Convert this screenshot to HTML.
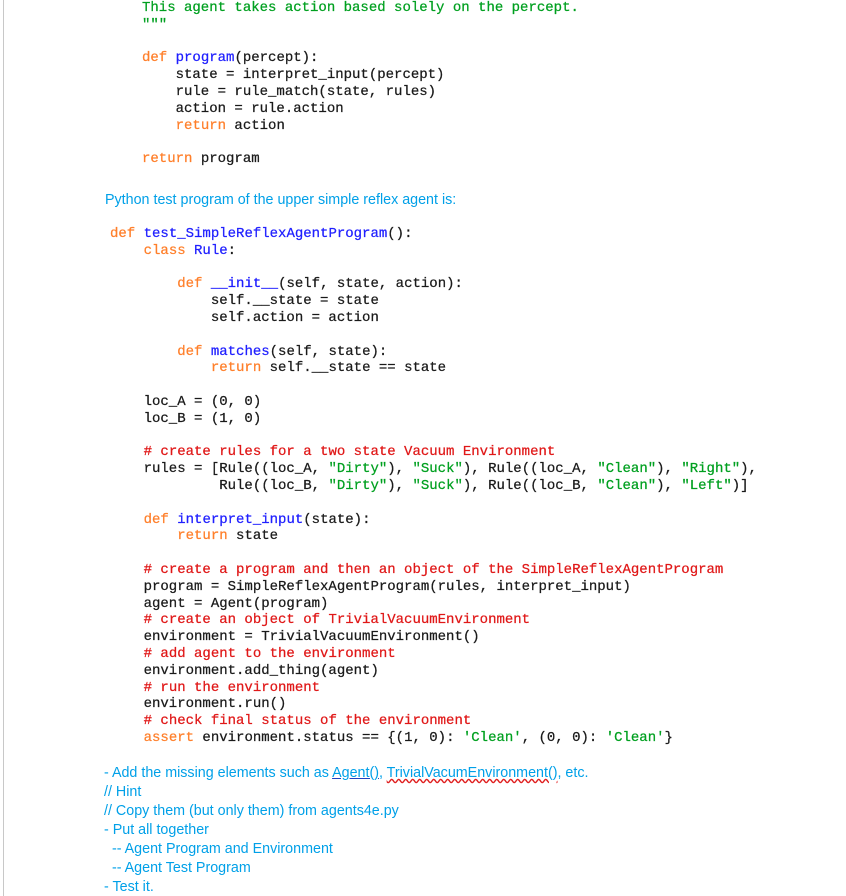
<!DOCTYPE html>
<html><head><meta charset="utf-8"><style>
html,body{margin:0;padding:0;background:#fff;width:846px;height:896px;overflow:hidden;position:relative}
.bar{position:absolute;left:3px;top:0;width:1px;height:896px;background:#c8c8c8}
.c{position:absolute;font-family:"Liberation Mono",monospace;font-size:14px;line-height:16.8px;white-space:pre;color:#1a1a1a;-webkit-text-stroke:0.25px}
.k{color:#ff7f2a}.f{color:#2020ff}.s{color:#00a020}.r{color:#e01818}
.t{position:absolute;font-family:"Liberation Sans",sans-serif;font-size:14.3px;line-height:19px;white-space:pre;color:#00a0e8}
.u{text-decoration:underline;text-decoration-color:#2040c0}
.w{text-decoration:underline wavy #e02020}
</style></head><body>
<div class="bar"></div>
<div class="c" style="left:142px;top:0px"><span class="s">This agent takes action based solely on the percept.
"""</span>

<span class="k">def</span> <span class="f">program</span>(percept):
    state = interpret_input(percept)
    rule = rule_match(state, rules)
    action = rule.action
    <span class="k">return</span> action

<span class="k">return</span> program</div>
<div class="t" style="left:105px;top:191px">Python test program of the upper simple reflex agent is:</div>
<div class="c" style="left:110px;top:226px"><span class="k">def</span> <span class="f">test_SimpleReflexAgentProgram</span>():
    <span class="k">class</span> <span class="f">Rule</span>:

        <span class="k">def</span> <span class="f">__init__</span>(self, state, action):
            self.__state = state
            self.action = action

        <span class="k">def</span> <span class="f">matches</span>(self, state):
            <span class="k">return</span> self.__state == state

    loc_A = (0, 0)
    loc_B = (1, 0)

    <span class="r"># create rules for a two state Vacuum Environment</span>
    rules = [Rule((loc_A, <span class="s">"Dirty"</span>), <span class="s">"Suck"</span>), Rule((loc_A, <span class="s">"Clean"</span>), <span class="s">"Right"</span>),
             Rule((loc_B, <span class="s">"Dirty"</span>), <span class="s">"Suck"</span>), Rule((loc_B, <span class="s">"Clean"</span>), <span class="s">"Left"</span>)]

    <span class="k">def</span> <span class="f">interpret_input</span>(state):
        <span class="k">return</span> state

    <span class="r"># create a program and then an object of the SimpleReflexAgentProgram</span>
    program = SimpleReflexAgentProgram(rules, interpret_input)
    agent = Agent(program)
    <span class="r"># create an object of TrivialVacuumEnvironment</span>
    environment = TrivialVacuumEnvironment()
    <span class="r"># add agent to the environment</span>
    environment.add_thing(agent)
    <span class="r"># run the environment</span>
    environment.run()
    <span class="r"># check final status of the environment</span>
    <span class="k">assert</span> environment.status == {(1, 0): <span class="s">'Clean'</span>, (0, 0): <span class="s">'Clean'</span>}</div>
<div class="t" style="left:104px;top:764px">- Add the missing elements such as <span class="u">Agent()</span>, <span class="w">TrivialVacumEnvironment()</span>, etc.
// Hint
// Copy them (but only them) from agents4e.py
- Put all together
  -- Agent Program and Environment
  -- Agent Test Program
- Test it.</div>
</body></html>
